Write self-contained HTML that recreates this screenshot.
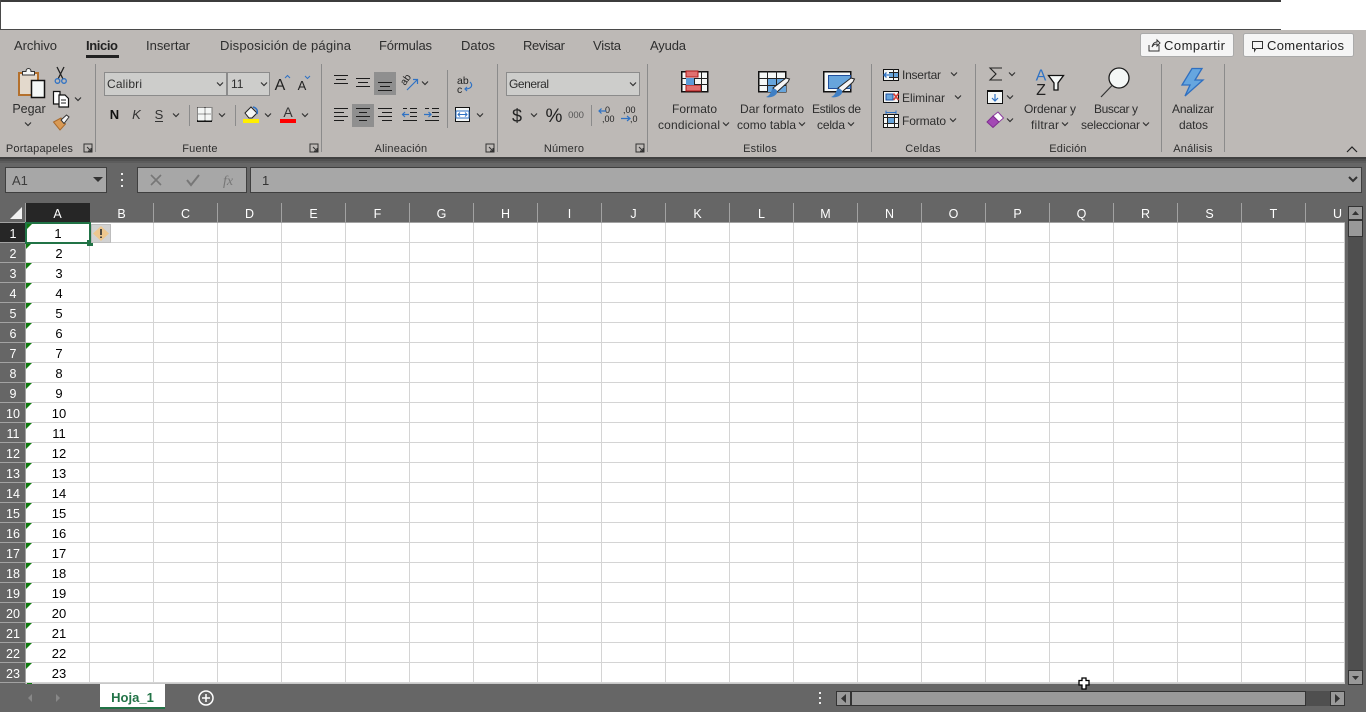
<!DOCTYPE html>
<html><head><meta charset="utf-8"><title>Excel</title>
<style>
html,body{margin:0;padding:0;background:#666;overflow:hidden}
svg{display:block;font-family:"Liberation Sans",sans-serif}
.t text,text.t{fill:#2e2e2e;font-size:12px}
.g text{fill:#2e2e2e;font-size:11px;text-anchor:middle;letter-spacing:.2px}
.h text{fill:#fff;font-size:12.5px;text-anchor:middle}
.n text{fill:#000;font-size:13px;text-anchor:middle}
.ch{fill:none;stroke:#333;stroke-width:1.2}
.c{shape-rendering:crispEdges}
</style></head><body>
<svg width="1366" height="712" viewBox="0 0 1366 712" xmlns="http://www.w3.org/2000/svg">
<defs>
<path id="c" class="ch" d="M-3-1.5 0 1.5 3-1.5"/>
<path id="dl" d="M-4-4H4V4H-4ZM-1-1 3 3M3 0V3H0" fill="none" stroke="#333" stroke-width="1"/>
<pattern id="gr" patternUnits="userSpaceOnUse" x="26" y="223" width="64" height="20">
<rect width="64" height="20" fill="#fff"/><rect x="63" width="1" height="20" fill="#d4d4d4"/><rect y="19" width="64" height="1" fill="#d4d4d4"/>
</pattern>
<pattern id="hd" patternUnits="userSpaceOnUse" x="26" y="203" width="64" height="19">
<rect x="63" width="1" height="19" fill="#a2a2a2"/>
</pattern>
<pattern id="rh" patternUnits="userSpaceOnUse" x="0" y="223" width="26" height="20">
<rect y="19" width="26" height="1" fill="#a2a2a2"/>
</pattern>
<pattern id="tri" patternUnits="userSpaceOnUse" x="26" y="223" width="64" height="20">
<path d="M0 0H6L0 6Z" fill="#107c10"/>
</pattern>
</defs>

<!-- title strip -->
<rect width="1366" height="30" fill="#fff"/>
<rect width="1281" height="2" fill="#3c3c3c" class="c"/>
<rect y="29" width="1281" height="1" fill="#4a4a4a" class="c"/>
<rect width="1" height="30" fill="#4a4a4a" class="c"/>
<!-- ribbon -->
<rect y="30" width="1366" height="127" fill="#bdb9b6"/>
<rect y="157" width="1366" height="555" fill="#666"/>
<rect y="157" width="1366" height="2" fill="#404040" class="c"/>
<rect y="159" width="1366" height="2" fill="#505050" class="c"/>
<rect y="161" width="1366" height="2" fill="#5c5c5c" class="c"/>

<g class="t">
<text x="14" y="50" textLength="43" style="font-size:13px">Archivo</text>
<text x="86" y="50" textLength="32" font-weight="bold" style="fill:#222;font-size:13px">Inicio</text>
<text x="146" y="50" textLength="44" style="font-size:13px">Insertar</text>
<text x="220" y="50" textLength="131" style="font-size:13px">Disposición de página</text>
<text x="379" y="50" textLength="53" style="font-size:13px">Fórmulas</text>
<text x="461" y="50" textLength="34" style="font-size:13px">Datos</text>
<text x="523" y="50" textLength="42" style="font-size:13px">Revisar</text>
<text x="593" y="50" textLength="28" style="font-size:13px">Vista</text>
<text x="650" y="50" textLength="36" style="font-size:13px">Ayuda</text>
</g>
<rect x="86" y="55" width="33" height="3" fill="#222" class="c"/>

<!-- share buttons -->
<rect x="1140.500" y="33.500" width="93" height="23" rx="2" fill="#f5f5f5" stroke="#aaa"/>
<rect x="1243.500" y="33.500" width="110" height="23" rx="2" fill="#f5f5f5" stroke="#aaa"/>
<path d="M1149 45V51H1159V45M1152 47C1153 43 1155 42 1157 42V40L1160 43 1157 46V44C1155 44 1153 45 1152 47Z" fill="none" stroke="#333"/>
<path d="M1252.500 41.500H1262.500V48.500H1256L1254.500 51V48.500H1252.500Z" fill="none" stroke="#333"/>
<text x="1164" y="50" textLength="61" style="fill:#222;font-size:13px">Compartir</text>
<text x="1267" y="50" textLength="77" style="fill:#222;font-size:13px">Comentarios</text>

<!-- separators -->
<g fill="#8b8b8b" class="c">
<rect x="95" y="64" width="1" height="88"/><rect x="321" y="64" width="1" height="88"/><rect x="497" y="64" width="1" height="88"/><rect x="647" y="64" width="1" height="88"/><rect x="871" y="64" width="1" height="88"/><rect x="975" y="64" width="1" height="88"/><rect x="1161" y="64" width="1" height="88"/><rect x="1224" y="64" width="1" height="88"/>
<rect x="189" y="105" width="1" height="21"/><rect x="235" y="105" width="1" height="21"/><rect x="447" y="70" width="1" height="58"/><rect x="591" y="105" width="1" height="21"/>
</g>

<!-- group labels -->
<g class="g">
<text x="39.500" y="152">Portapapeles</text><text x="200" y="152">Fuente</text><text x="401" y="152">Alineación</text><text x="564" y="152">Número</text><text x="760" y="152">Estilos</text><text x="923" y="152">Celdas</text><text x="1068" y="152">Edición</text><text x="1193" y="152">Análisis</text>
</g>
<use href="#dl" x="88" y="148"/><use href="#dl" x="314" y="148"/><use href="#dl" x="490" y="148"/><use href="#dl" x="640" y="148"/>
<path d="M1347 152 1352 147 1357 152" fill="none" stroke="#222" stroke-width="1.200"/>

<!-- Portapapeles -->
<rect x="19" y="73" width="19" height="22" fill="#e3d9cc" stroke="#b4702c" stroke-width="2"/>
<path d="M22.500 75V71.500H26C26 67.500 31 67.500 31 71.500H34.500V75Z" fill="#f4f6f5" stroke="#333"/>
<rect x="31.500" y="80.500" width="13" height="17" fill="#f4f7f6" stroke="#111" stroke-width="1.500"/>
<text x="29" y="113" text-anchor="middle" style="fill:#2e2e2e;font-size:12.5px">Pegar</text>
<use href="#c" x="28" y="124"/>
<path d="M57 67 63 79M64 67 58 79" stroke="#222" stroke-width="1.300" fill="none"/>
<circle cx="57.500" cy="81" r="2.300" fill="none" stroke="#2f72c4" stroke-width="1.300"/><circle cx="64" cy="81" r="2.300" fill="none" stroke="#2f72c4" stroke-width="1.300"/>
<path d="M53.500 91.500H60V104H53.500Z" fill="#fff" stroke="#111" stroke-width="1.200"/>
<path d="M59 95H65L68.500 98.500V107H59Z" fill="#fff" stroke="#111" stroke-width="1.200"/><path d="M61 100H66M61 103H66" stroke="#222"/>
<use href="#c" x="78" y="99"/>
<path d="M61 118 53.500 122 60 130 65.500 124Z" fill="#d99a55" stroke="#a96a2c"/><path d="M61 120 64 123.500 69 117 66.500 115Z" fill="#f5f5f5" stroke="#333"/>

<!-- Fuente -->
<rect x="104.500" y="72.500" width="122" height="23" fill="#cdcdcb" stroke="#8b8b8b"/>
<rect x="227.500" y="72.500" width="42" height="23" fill="#cdcdcb" stroke="#8b8b8b"/>
<text x="107" y="88" textLength="35" class="t">Calibri</text><text x="231" y="88" class="t">11</text>
<use href="#c" x="220" y="84"/><use href="#c" x="264" y="84"/>
<text x="280" y="90" text-anchor="middle" style="font-size:16px;fill:#222">A</text>
<path d="M285 78 287.500 75.500 290 78" fill="none" stroke="#2f72c4"/>
<text x="302" y="90" text-anchor="middle" style="font-size:13px;fill:#222">A</text>
<path d="M305 76 307.500 78.500 310 76" fill="none" stroke="#2f72c4"/>
<text x="114.500" y="119" text-anchor="middle" style="font-size:13px;font-weight:bold;fill:#111">N</text>
<text x="136.500" y="119" text-anchor="middle" style="font-size:13px;font-style:italic;fill:#333">K</text>
<text x="159" y="119" text-anchor="middle" style="font-size:13px;fill:#333">S</text><rect x="155" y="121" width="8" height="1" fill="#333"/>
<use href="#c" x="176" y="115"/>
<rect x="197.500" y="107.500" width="14" height="13" fill="#f4f6f5"/>
<path d="M197.500 107.500H212M197.500 107.500V121M212 107.500V121M205 107.500V121M197.500 114H212" stroke="#333" stroke-dasharray="1 1" fill="none" class="c"/><rect x="197" y="120.500" width="15" height="1.500" fill="#111"/>
<use href="#c" x="222" y="115"/>
<path d="M245 113 251 107 257 113 252 118H249Z" fill="#f4f6f5" stroke="#222"/><path d="M253 107C257 108 258 111 257 114" fill="none" stroke="#2f72c4" stroke-width="1.500"/>
<rect x="243" y="119" width="16" height="4" fill="#ffef00" class="c"/>
<use href="#c" x="268" y="115"/>
<text x="288" y="117" text-anchor="middle" style="font-size:14px;fill:#333">A</text>
<rect x="280" y="119" width="16" height="4" fill="#f00" class="c"/>
<use href="#c" x="305" y="115"/>

<!-- Alineación -->
<rect x="374" y="72" width="22" height="23" fill="#8f8f8f" class="c"/>
<rect x="352" y="104" width="22" height="23" fill="#8f8f8f" class="c"/>
<g stroke="#1c1c1c" class="c">
<path d="M334 75.500H348M336 79.500H346M334 83.500H348"/>
<path d="M356 78.500H370M358 82.500H368M356 86.500H370"/>
<path d="M378 82.500H392M380 86.500H390M378 90.500H392"/>
<path d="M334 108.500H348M334 112.500H344M334 116.500H348M334 120.500H344"/>
<path d="M356 108.500H370M359 112.500H367M356 116.500H370M359 120.500H367"/>
<path d="M378 108.500H392M382 112.500H392M378 116.500H392M382 120.500H392"/>
<path d="M410 108.500H417M410 112.500H417M410 116.500H417M403 120.500H417M403 108.500H407"/>
<path d="M432 108.500H439M432 112.500H439M432 116.500H439M425 120.500H439M425 108.500H429"/>
</g>
<path d="M402 114.500H409M405 112 402.500 114.500 405 117" fill="none" stroke="#2f72c4" stroke-width="1.200"/>
<path d="M424 114.500H431M428.500 112 431 114.500 428.500 117" fill="none" stroke="#2f72c4" stroke-width="1.200"/>
<text x="0" y="0" transform="translate(405 86) rotate(-55)" style="font-size:10px;fill:#222">ab</text>
<path d="M407 90 417 80M413 79.500H417.500V84" fill="none" stroke="#2f72c4" stroke-width="1.200"/>
<use href="#c" x="425" y="83"/>
<text x="457" y="84" style="font-size:10.500px;fill:#222">ab</text><text x="457" y="93" style="font-size:10.500px;fill:#222">c</text>
<path d="M470 82C473 85 472 89 465 89M467 87 465 89 467 91" fill="none" stroke="#2f72c4" stroke-width="1.200"/>
<rect x="455.500" y="107.500" width="14" height="14" fill="#f3f6f6" stroke="#111"/><rect x="456" y="111" width="13" height="7" fill="#fff" stroke="#2f72c4"/>
<path d="M458 114.500H467M460 112.500 458 114.500 460 116.500M465 112.500 467 114.500 465 116.500" fill="none" stroke="#2f72c4"/>
<use href="#c" x="480" y="115"/>

<!-- Número -->
<rect x="506.500" y="72.500" width="133" height="23" fill="#cdcdcb" stroke="#8b8b8b"/>
<text x="509" y="88" textLength="40" class="t">General</text><use href="#c" x="633" y="84"/>
<text x="517" y="122" text-anchor="middle" style="font-size:18px;fill:#222">$</text>
<use href="#c" x="534" y="115"/>
<text x="554" y="122" text-anchor="middle" style="font-size:19px;fill:#222">%</text>
<text x="576" y="118" text-anchor="middle" style="font-size:9.500px;fill:#555">000</text>
<text x="605" y="113" style="font-size:9px;fill:#222">0</text><text x="602" y="122" style="font-size:9px;fill:#222">,00</text>
<path d="M599 111H606M601.500 108.500 599 111 601.500 113.500" fill="none" stroke="#2f72c4" stroke-width="1.200"/>
<text x="623" y="113" style="font-size:9px;fill:#222">,00</text><text x="630" y="122" style="font-size:9px;fill:#222">,0</text>
<path d="M621 118.500H630M627 116 630 118.500 627 121" fill="none" stroke="#2f72c4" stroke-width="1.200"/>

<!-- Estilos -->
<g class="c">
<rect x="681.500" y="71.500" width="26" height="20" fill="#f5f8f7" stroke="#111" stroke-width="1.500"/>
<rect x="686" y="71" width="12" height="6" fill="#e07070" stroke="#b01818"/>
<rect x="686" y="85" width="15" height="6" fill="#e07070" stroke="#b01818"/>
<rect x="686" y="78" width="8" height="7" fill="#5b9bd8"/>
<path d="M694.500 78V85M701.500 71V91M681 78.500H686M694 78.500H708M681 84.500H686M694 84.500H708" stroke="#222" fill="none"/>
<rect x="758.500" y="71.500" width="27" height="20" fill="#f5f8f7" stroke="#111" stroke-width="1.500"/>
<rect x="768" y="78" width="18" height="14" fill="#67a5dc"/>
<path d="M767.500 71V92M776.500 71V92M758 78.500H786M758 85.500H786" stroke="#222" fill="none"/>
<rect x="823.500" y="71.500" width="27" height="20" fill="#f5f8f7" stroke="#111" stroke-width="1.500"/>
<rect x="828.500" y="75.500" width="22" height="13" fill="#67a5dc" stroke="#1f4e9c"/>
</g>
<path d="M773 88 786 78 789.500 79 788 82 777 92Z" fill="#f5f5f5" stroke="#222"/>
<path d="M772 89C775 88 778 90 777 93 775 97 769 98 766 97 769 96 771 93 772 89Z" fill="#3f7fc4"/>
<path d="M838 88 851 78 854.500 79 853 82 842 92Z" fill="#f5f5f5" stroke="#222"/>
<path d="M837 89C840 88 843 90 842 93 840 97 834 98 831 97 834 96 836 93 837 89Z" fill="#3f7fc4"/>
<g class="t">
<text x="672" y="113" textLength="45">Formato</text><text x="658" y="129" textLength="62">condicional</text>
<text x="740" y="113" textLength="64">Dar formato</text><text x="737" y="129" textLength="59">como tabla</text>
<text x="812" y="113" textLength="49">Estilos de</text><text x="817" y="129" textLength="28">celda</text>
<text x="902" y="79" textLength="39">Insertar</text><text x="902" y="102" textLength="43">Eliminar</text><text x="902" y="125" textLength="44">Formato</text>
<text x="1024" y="113" textLength="52">Ordenar y</text><text x="1031" y="129" textLength="28">filtrar</text>
<text x="1094" y="113" textLength="44">Buscar y</text><text x="1081" y="129" textLength="59">seleccionar</text>
<text x="1172" y="113" textLength="42">Analizar</text><text x="1179" y="129" textLength="29">datos</text>
</g>
<use href="#c" x="726" y="124"/><use href="#c" x="802" y="124"/><use href="#c" x="851" y="124"/>
<use href="#c" x="954" y="74"/><use href="#c" x="958" y="97"/><use href="#c" x="953" y="120"/>
<use href="#c" x="1065" y="124"/><use href="#c" x="1146" y="124"/>

<!-- Celdas -->
<g class="c">
<rect x="883.500" y="69.500" width="15" height="11" fill="#f5f8f7" stroke="#111"/><rect x="889" y="72" width="9" height="6" fill="#67a5dc"/><path d="M893.500 69V81M889 72.500H899M889 77.500H899" stroke="#222"/>
<rect x="883.500" y="91.500" width="15" height="11" fill="#f5f8f7" stroke="#111"/><rect x="886" y="94" width="7" height="6" fill="#67a5dc" stroke="#1f4e9c"/>
<rect x="883.500" y="114.500" width="15" height="13" fill="#f5f8f7" stroke="#111"/><rect x="887" y="117" width="8" height="7" fill="#67a5dc"/><path d="M887.500 114V128M894.500 114V128M883 117.500H899M883 123.500H899" stroke="#222"/>
</g>
<path d="M889 75H884M886.500 72.500 884 75 886.500 77.500" fill="none" stroke="#2f72c4" stroke-width="1.300"/>
<path d="M893.500 93.500 898.500 100M898.500 93.500 893.500 100" stroke="#d6423a" stroke-width="1.700"/>
<path d="M886 112.500H896M886 110.500V114M896 110.500V114" stroke="#2f72c4" fill="none"/>

<!-- Edición -->
<path d="M1002 68H990L996 74 990 80H1002" fill="none" stroke="#222" stroke-width="1.100"/>
<use href="#c" x="1012" y="74"/>
<rect x="987.500" y="90.500" width="15" height="13" fill="#f5f8f7" stroke="#111"/><rect x="987" y="90" width="16" height="2" fill="#111"/>
<path d="M995 94V101M992 98 995 101 998 98" fill="none" stroke="#2f72c4" stroke-width="1.200"/>
<use href="#c" x="1010" y="97"/>
<path d="M993 116 998 112 1003.500 118 999 122Z" fill="#fff" stroke="#8b3b9e"/><path d="M987 122 993 116 999 122 993 127.500Z" fill="#a349b4" stroke="#7f2e90"/>
<use href="#c" x="1010" y="120"/>
<text x="1041" y="80.500" text-anchor="middle" style="font-size:16px;fill:#2f72c4">A</text>
<text x="1041" y="95" text-anchor="middle" style="font-size:16px;fill:#222">Z</text>
<path d="M1048.500 75.500H1063.500L1058 83V90H1054V83Z" fill="#f5f8f7" stroke="#111" stroke-width="1.300"/>
<circle cx="1119" cy="78" r="10" fill="#f4f7f6" stroke="#1c1c1c" stroke-width="1.300"/>
<path d="M1112 85.500 1101 97" stroke="#333" stroke-width="1.200"/>
<path d="M1192 68.500H1202L1195 80H1203L1185 96 1190 85H1182Z" fill="#66a6df" stroke="#2f6fc0" stroke-width="1.300"/>

<!-- Formula bar -->
<rect x="5.500" y="167.500" width="101" height="25" fill="#a7a7a7" stroke="#3f3f3f"/>
<text x="12" y="185" style="font-size:13px;fill:#3d3d3d">A1</text>
<path d="M93 177H103L98 182Z" fill="#333"/>
<rect x="121" y="173" width="2" height="2" fill="#eee"/><rect x="121" y="179" width="2" height="2" fill="#eee"/><rect x="121" y="185" width="2" height="2" fill="#eee"/>
<rect x="137.500" y="167.500" width="109" height="25" fill="#a7a7a7" stroke="#3f3f3f"/>
<path d="M151 175 161 185M161 175 151 185" stroke="#777" stroke-width="1.600"/>
<path d="M187 180 191 185 199 175" fill="none" stroke="#777" stroke-width="2"/>
<text x="228" y="185" text-anchor="middle" style="font-family:'Liberation Serif',serif;font-style:italic;font-size:14px;fill:#777">fx</text>
<rect x="250.500" y="167.500" width="1111" height="25" fill="#a7a7a7" stroke="#3f3f3f"/>
<text x="262" y="185" style="font-size:13px;fill:#333">1</text>
<path d="M1349 177 1353 181 1357 177" fill="none" stroke="#333" stroke-width="2"/>

<!-- Grid -->
<rect x="26" y="223" width="1318" height="460" fill="url(#gr)"/>
<rect x="26" y="223" width="64" height="460" fill="url(#tri)"/>
<rect x="26" y="683" width="1319" height="1" fill="#c8c8c8" class="c"/>
<rect x="1344" y="223" width="1" height="461" fill="#c8c8c8" class="c"/>
<rect x="26" y="203" width="1318" height="19" fill="url(#hd)"/>
<rect x="0" y="223" width="26" height="460" fill="url(#rh)"/>
<rect x="0" y="222" width="1345" height="1" fill="#a2a2a2" class="c"/>
<rect x="25" y="203" width="1" height="481" fill="#a2a2a2" class="c"/>
<rect x="26" y="203" width="64" height="19" fill="#262626" class="c"/>
<rect x="0" y="223" width="25" height="19" fill="#262626" class="c"/>
<path d="M22 207V219H10Z" fill="#f2f2f2"/>

<g class="h">
<text x="57.500" y="218">A</text><text x="121.500" y="218">B</text><text x="185.500" y="218">C</text><text x="249.500" y="218">D</text><text x="313.500" y="218">E</text><text x="377.500" y="218">F</text><text x="441.500" y="218">G</text><text x="505.500" y="218">H</text><text x="569.500" y="218">I</text><text x="633.500" y="218">J</text><text x="697.500" y="218">K</text><text x="761.500" y="218">L</text><text x="825.500" y="218">M</text><text x="889.500" y="218">N</text><text x="953.500" y="218">O</text><text x="1017.500" y="218">P</text><text x="1081.500" y="218">Q</text><text x="1145.500" y="218">R</text><text x="1209.500" y="218">S</text><text x="1273.500" y="218">T</text><text x="1337.500" y="218">U</text>
<text x="13" y="238">1</text><text x="13" y="258">2</text><text x="13" y="278">3</text><text x="13" y="298">4</text><text x="13" y="318">5</text><text x="13" y="338">6</text><text x="13" y="358">7</text><text x="13" y="378">8</text><text x="13" y="398">9</text><text x="13" y="418">10</text><text x="13" y="438">11</text><text x="13" y="458">12</text><text x="13" y="478">13</text><text x="13" y="498">14</text><text x="13" y="518">15</text><text x="13" y="538">16</text><text x="13" y="558">17</text><text x="13" y="578">18</text><text x="13" y="598">19</text><text x="13" y="618">20</text><text x="13" y="638">21</text><text x="13" y="658">22</text><text x="13" y="678">23</text>
</g>
<g class="n">
<text x="58" y="238">1</text><text x="59" y="258">2</text><text x="59" y="278">3</text><text x="59" y="298">4</text><text x="59" y="318">5</text><text x="59" y="338">6</text><text x="59" y="358">7</text><text x="59" y="378">8</text><text x="59" y="398">9</text><text x="59" y="418">10</text><text x="59" y="438">11</text><text x="59" y="458">12</text><text x="59" y="478">13</text><text x="59" y="498">14</text><text x="59" y="518">15</text><text x="59" y="538">16</text><text x="59" y="558">17</text><text x="59" y="578">18</text><text x="59" y="598">19</text><text x="59" y="618">20</text><text x="59" y="638">21</text><text x="59" y="658">22</text><text x="59" y="678">23</text>
</g>

<!-- selection -->
<rect x="26" y="223" width="64" height="20" fill="none" stroke="#217346" stroke-width="2" class="c"/>
<path d="M27 224H32L27 229Z" fill="#107c10"/>
<rect x="87" y="240" width="6" height="6" fill="#217346" class="c"/>
<!-- warning -->
<rect x="91.500" y="224.500" width="19" height="18" fill="#d2d2d2" stroke="#bdbdbd"/>
<path d="M101 226 109 233.500 101 241 93 233.500Z" fill="#edc78f"/>
<path d="M101 229V235M101 236.500V238" stroke="#333" stroke-width="1.700"/>

<!-- Vertical scrollbar -->
<rect x="1348" y="206" width="15" height="478" fill="#4f4f4f"/>
<rect x="1348.500" y="206.500" width="14" height="13" fill="#999" stroke="#333"/>
<path d="M1352 215H1359L1355.500 211Z" fill="#333"/>
<rect x="1348.500" y="220.500" width="14" height="16" fill="#999" stroke="#333"/>
<rect x="1348.500" y="670.500" width="14" height="14" fill="#999" stroke="#333"/>
<path d="M1352 676H1359L1355.500 680Z" fill="#333"/>

<!-- Bottom bar -->
<path d="M27 683.500H32" stroke="#107c10" class="c"/>
<path d="M32 694V702L28 698Z" fill="#888"/>
<path d="M56 694V702L60 698Z" fill="#888"/>
<rect x="100" y="684" width="65" height="23" fill="#fff" class="c"/>
<rect x="100" y="707" width="65" height="2" fill="#217346" class="c"/>
<text x="132.500" y="702" text-anchor="middle" style="font-size:13px;font-weight:bold;fill:#217346">Hoja_1</text>
<circle cx="206" cy="698" r="7" fill="none" stroke="#fff" stroke-width="1.500"/>
<path d="M202 698H210M206 694V702" stroke="#fff" stroke-width="1.500"/>
<rect x="819" y="692" width="2" height="2" fill="#eee"/><rect x="819" y="697" width="2" height="2" fill="#eee"/><rect x="819" y="702" width="2" height="2" fill="#eee"/>
<rect x="836" y="691" width="509" height="15" fill="#4f4f4f"/>
<rect x="836.500" y="691.500" width="14" height="14" fill="#999" stroke="#333"/>
<path d="M846 694V703L841 698.500Z" fill="#333"/>
<rect x="851.500" y="691.500" width="454" height="14" fill="#999" stroke="#333"/>
<rect x="1330.500" y="691.500" width="14" height="14" fill="#999" stroke="#333"/>
<path d="M1335 694V703L1340 698.500Z" fill="#333"/>
<!-- cursor -->
<path d="M1082 678H1086V680.500H1089V685H1086V689H1082V685H1079V680.500H1082Z" fill="#fff" stroke="#000" stroke-width="1.300"/>
</svg>
</body></html>
